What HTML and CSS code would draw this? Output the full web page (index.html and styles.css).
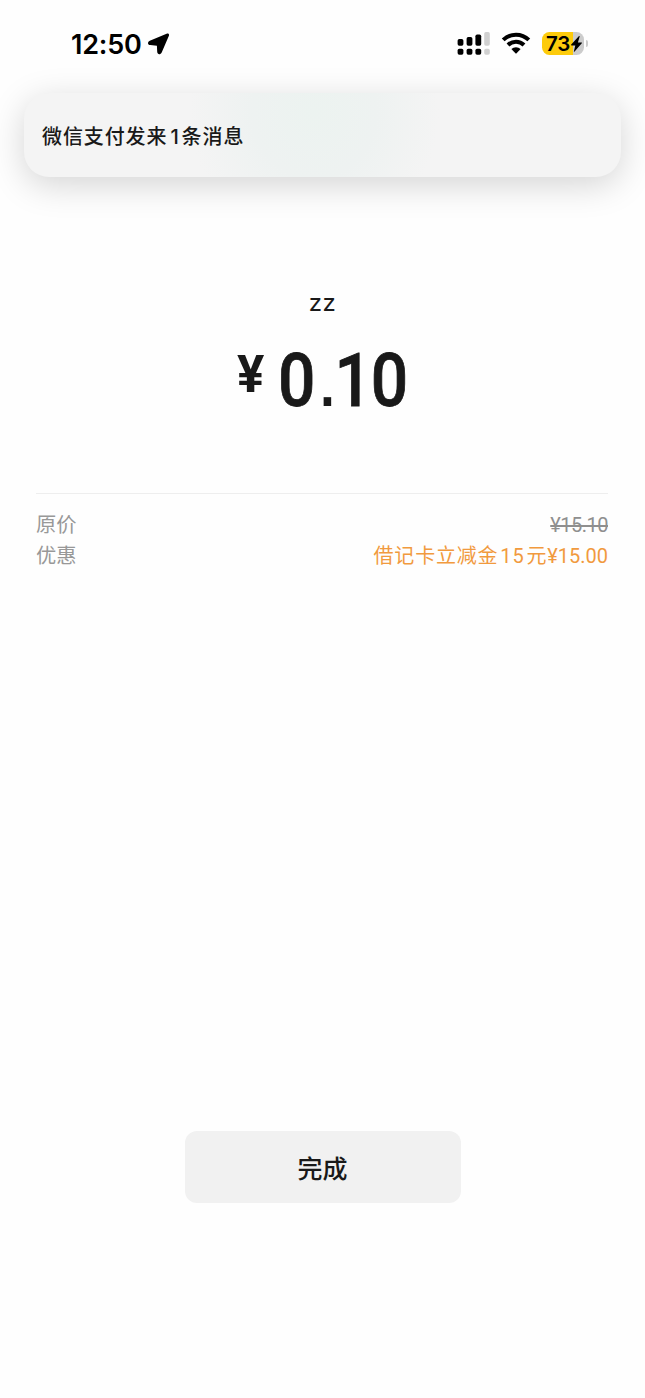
FILE: index.html
```html
<!DOCTYPE html>
<html lang="zh-CN">
<head>
<meta charset="utf-8">
<title>支付结果</title>
<link rel="stylesheet" href="styles.css">
</head>
<body>
<header class="status">
  <div class="clock"><span class="time">12:50</span>
    <svg class="location" viewBox="0 0 22 22" width="22" height="22"><path d="M18.6.8 1.8 7.8C-.7 8.9-.6 11.9 2.3 12.1L8.9 12.8 9.2 18.8C9.3 21.7 12.5 22 13.7 19.4L20.8 3.1C21.6 1.1 20.3 0 18.6.8Z"/></svg>
  </div>
  <div class="indicators">
    <svg class="signal" viewBox="0 0 33 23" width="33" height="23">
      <g><rect x="0.6" y="7" width="5.8" height="6.8" rx="1.7"/><rect x="9.6" y="5" width="5.8" height="8.8" rx="1.7"/><rect x="18.4" y="2.6" width="5.8" height="11.2" rx="1.7"/><rect x="0.6" y="16.7" width="5.8" height="6" rx="1.7"/><rect x="9.6" y="16.7" width="5.8" height="6" rx="1.7"/><rect x="18.4" y="16.7" width="5.8" height="6" rx="1.7"/></g>
      <g fill="#d0d0d0"><rect x="27.2" y="0" width="5.6" height="13.8" rx="1.7"/><rect x="27.2" y="16.7" width="5.6" height="6" rx="1.7"/></g>
    </svg>
    <svg class="wifi" viewBox="0 0 30 22" width="30" height="22">
      <path d="M2.2 7.9a18.2 18.2 0 0 1 25.6 0M7 13a11.4 11.4 0 0 1 16 0" fill="none" stroke="#000" stroke-width="4"/>
      <path d="M10.4 17a6.7 6.7 0 0 1 9.2 0L15.6 21.2a.9.9 0 0 1-1.2 0Z"/>
    </svg>
    <div class="battery"><span class="level">73</span>
      <svg class="bolt" viewBox="0 0 11 16" width="11" height="16"><path d="M7.8.2.2 8.6c-.3.4-.1.8.4.8h3.7L2.9 15.2c-.1.7.3.8.7.3l7.2-8.3c.3-.4.1-.8-.4-.8H6.9L8.6.7C8.8 0 8.3-.2 7.8.2Z"/></svg>
    </div>
    <span class="battery-cap"></span>
  </div>
</header>
<section class="notice"><p class="notice-text">微信支付发来<span class="count">1</span>条消息</p></section>
<main class="receipt">
  <p class="payee">zz</p>
  <p class="amount"><span class="currency">¥</span><span class="value">0<span class="point">.</span>10</span></p>
  <dl class="details">
    <div class="row"><dt>原价</dt><dd class="original">¥15.10</dd></div>
    <div class="row"><dt>优惠</dt><dd class="discount"><span class="coupon">借记卡立减金<span class="coupon-value">15</span>元</span><span class="price">¥15.00</span></dd></div>
  </dl>
</main>
<footer class="actions"><button class="done">完成</button></footer>
</body>
</html>
```
FILE: styles.css
```css
* { box-sizing: border-box; }
body { margin: 0; height: 1398px; display: flex; flex-direction: column; background: #fefefe; color: #191919; font-family: Roboto, "Noto Sans CJK SC", sans-serif; }
p, dl, dd { margin: 0; }
svg { display: block; flex: none; }

.status { height: 93px; flex: none; display: flex; justify-content: space-between; padding: 31px 57px 0 71px; color: #000; }
.clock { display: flex; align-items: flex-start; height: 27px; }
.time { font: 600 27px/27px Inter, sans-serif; width: 77px; letter-spacing: -0.2px; }
.location { margin-top: 2px; }
.indicators { display: flex; align-items: flex-start; height: 27px; }
.signal { margin-top: 1px; }
.wifi { margin: 1px 0 0 11px; }
.battery { display: flex; align-items: center; width: 42px; height: 23px; margin: 1px 0 0 11px; padding-left: 4px; border-radius: 7.5px; background: linear-gradient(90deg, #fdcb0b 73%, #ccc 73%); }
.level { font: 600 20.5px/23px Inter, sans-serif; width: 25px; letter-spacing: -0.3px; }
.battery-cap { width: 2px; height: 7px; margin: 9px 0 0 2px; border-radius: 0 3px 3px 0; background: #ccc; }

.notice { height: 84px; flex: none; margin: 0 24px; padding: 3px 18px 0; display: flex; align-items: center; border-radius: 25px; background: radial-gradient(ellipse 125px 130px at 290px 20px, #ecf3f0 0, #eef2f1 50%, #f4f4f4 100%) #f4f4f4; box-shadow: 0 8px 34px rgba(0,0,0,.17); }
.notice-text { font-size: 20px; font-weight: 500; line-height: 30px; letter-spacing: .9px; white-space: nowrap; }
.count { font-family: Inter, sans-serif; margin: 0 2px 0 3px; }

.receipt { padding: 110px 37px 0; }
.payee { height: 32px; font: 400 24px/32px Inter, sans-serif; text-align: center; letter-spacing: .5px; }
.amount { height: 174px; padding: 22px 0 0 200px; display: flex; align-items: flex-start; font-weight: 500; }
.currency { width: 41px; padding-top: 4px; font-size: 51px; line-height: 60px; font-weight: 700; }
.value { font-size: 74px; line-height: 80px; letter-spacing: -1.5px; white-space: nowrap; transform: scaleX(.89); transform-origin: 0 50%; -webkit-text-stroke: .8px #191919; }
.point { display: inline-block; width: 23px; padding-left: 6.5px; line-height: 1; font-family: "Liberation Sans", sans-serif; font-size: 60px; font-weight: 700; -webkit-text-stroke: 0; }
.details { margin-left: -1px; border-top: 1px solid #eee; padding-top: 16px; color: #8f8f8f; font-size: 20px; }
.row { display: flex; justify-content: space-between; height: 31px; line-height: 31px; }
dt { color: #989898; font-size: 20.3px; }
.original { text-decoration: line-through; letter-spacing: -.5px; }
.discount { color: #f19a3e; display: flex; }
.coupon { letter-spacing: .8px; }
.coupon-value { margin: 0 2px; }

.actions { margin-top: 559px; display: flex; justify-content: center; }
.done { width: 276px; height: 72px; padding: 0; border: 0; border-radius: 12px; background: #f1f1f1; color: #191919; font: 500 25px/70px "Noto Sans CJK SC", sans-serif; }
```
